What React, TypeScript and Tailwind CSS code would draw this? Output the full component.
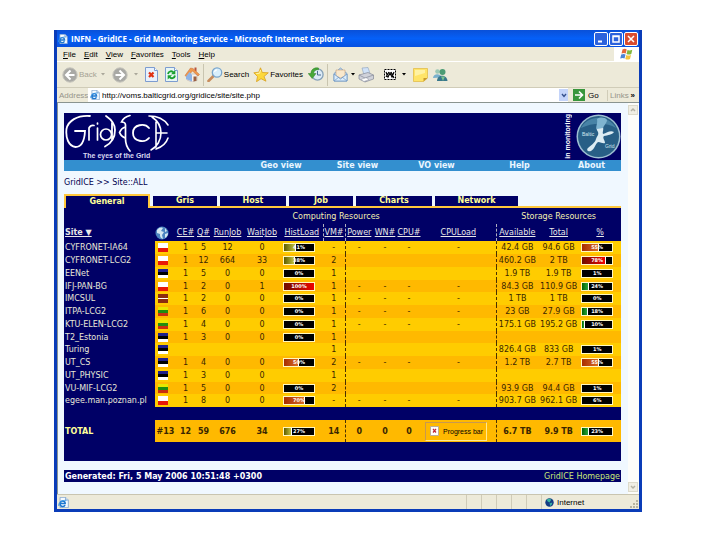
import type { ReactNode } from "react";
import clsx from "clsx";

type FlagCode = "pl" | "ee" | "lv" | "lt";
type Level = "olive" | "red" | "orange" | "green" | "none";

interface Meter {
  value: number;
  level: Level;
}

interface Site {
  name: string;
  flag: FlagCode;
  ce?: string;
  queues?: string;
  run?: string;
  wait?: string;
  hist?: Meter;
  vm: string;
  hosts?: boolean;
  available?: string;
  total?: string;
  used?: Meter;
}

const idle: Meter = { value: 0, level: "none" };

const sites: Site[] = [
  { name: "CYFRONET-IA64", flag: "pl", ce: "1", queues: "5", run: "12", wait: "0", hist: { value: 41, level: "olive" }, vm: "-", hosts: true, available: "42.4 GB", total: "94.6 GB", used: { value: 55, level: "orange" } },
  { name: "CYFRONET-LCG2", flag: "pl", ce: "1", queues: "12", run: "664", wait: "33", hist: { value: 38, level: "olive" }, vm: "2", available: "460.2 GB", total: "2 TB", used: { value: 78, level: "red" } },
  { name: "EENet", flag: "ee", ce: "1", queues: "5", run: "0", wait: "0", hist: idle, vm: "1", available: "1.9 TB", total: "1.9 TB", used: { value: 1, level: "none" } },
  { name: "IFJ-PAN-BG", flag: "pl", ce: "1", queues: "2", run: "0", wait: "1", hist: { value: 100, level: "red" }, vm: "1", hosts: true, available: "84.3 GB", total: "110.9 GB", used: { value: 24, level: "green" } },
  { name: "IMCSUL", flag: "lv", ce: "1", queues: "2", run: "0", wait: "0", hist: idle, vm: "1", hosts: true, available: "1 TB", total: "1 TB", used: { value: 0, level: "none" } },
  { name: "ITPA-LCG2", flag: "lt", ce: "1", queues: "6", run: "0", wait: "0", hist: idle, vm: "1", hosts: true, available: "23 GB", total: "27.9 GB", used: { value: 18, level: "green" } },
  { name: "KTU-ELEN-LCG2", flag: "lt", ce: "1", queues: "4", run: "0", wait: "0", hist: idle, vm: "1", hosts: true, available: "175.1 GB", total: "195.2 GB", used: { value: 10, level: "green" } },
  { name: "T2_Estonia", flag: "ee", ce: "1", queues: "3", run: "0", wait: "0", hist: idle, vm: "1" },
  { name: "Turing", flag: "ee", vm: "1", available: "826.4 GB", total: "833 GB", used: { value: 1, level: "none" } },
  { name: "UT_CS", flag: "ee", ce: "1", queues: "4", run: "0", wait: "0", hist: { value: 50, level: "orange" }, vm: "2", hosts: true, available: "1.2 TB", total: "2.7 TB", used: { value: 55, level: "orange" } },
  { name: "UT_PHYSIC", flag: "ee", ce: "1", queues: "3", run: "0", wait: "0", vm: "1" },
  { name: "VU-MIF-LCG2", flag: "lt", ce: "1", queues: "5", run: "0", wait: "0", hist: idle, vm: "2", available: "93.9 GB", total: "94.4 GB", used: { value: 1, level: "none" } },
  { name: "egee.man.poznan.pl", flag: "pl", ce: "1", queues: "8", run: "0", wait: "0", hist: { value: 70, level: "orange" }, vm: "-", hosts: true, available: "903.7 GB", total: "962.1 GB", used: { value: 6, level: "none" } },
];

const LEVELS: Record<Level, string> = {
  olive: "bg-linear-to-r from-[#5c5c00] to-[#c4c43c]",
  red: "bg-linear-to-r from-[#6e0a00] to-[#f00000]",
  orange: "bg-linear-to-r from-[#a82c00] to-[#d86a24]",
  green: "bg-linear-to-r from-[#006000] to-[#28a83c]",
  none: "bg-black",
};

const FLAGS: Record<FlagCode, string[]> = {
  pl: ["#ffffff", "#ffffff", "#e81808", "#e81808"],
  ee: ["#20208c", "#000000", "#ffffff"],
  lv: ["#8c2c10", "#8c2c10", "#ffffff", "#8c2c10", "#8c2c10"],
  lt: ["#e8e800", "#208c10", "#c83010"],
};

// --- Small pieces ---
const Flag = ({ code }: { code: FlagCode }) => {
  const stripes = FLAGS[code];
  return (
    <svg viewBox="0 0 10 9" className="ml-[3px] block h-[9px] w-[10px]" shapeRendering="crispEdges">
      {stripes.map((color, i) => (
        <rect key={i} x="0" width="10" y={(9 / stripes.length) * i} height={9 / stripes.length} fill={color} />
      ))}
    </svg>
  );
};

const Bar = ({ value, level }: Meter) => (
  <div className="relative ml-[2px] h-[9px] w-8 border border-[#fff8c0] bg-black">
    {level !== "none" && (
      <div className={clsx("h-full", LEVELS[level], value < 100 && "border-r border-white")} style={{ width: `${value}%` }} />
    )}
    <span className="absolute inset-0 text-center text-[5px] leading-[7px] font-bold text-white">{value}%</span>
  </div>
);

const Caret = ({ dim }: { dim?: boolean }) => (
  <svg viewBox="0 0 4 3" className="h-[3px] w-1 shrink-0">
    <path d="M0 0h4L2 2.5z" fill={dim ? "#aaa79a" : "#000"} />
  </svg>
);

const IeIcon = ({ className }: { className?: string }) => (
  <svg viewBox="0 0 16 16" className={clsx("shrink-0", className)}>
    <path d="M3 .5h8l4 4v11H3z" fill="#f4faff" stroke="#6a94c4" />
    <path d="M11 .5v4h4" fill="#cfe2f5" stroke="#6a94c4" />
    <path d="M2.500 9.500h8c0-5-7-5-7.500 0-.3 5 6 5.500 7.200 2" fill="none" stroke="#1f78d0" strokeWidth="2.200" />
    <path d="M1 13C-.5 9 6 4 12 5" fill="none" stroke="#3c9be8" strokeWidth="1.200" />
  </svg>
);

const ArrowIcon = ({ back }: { back?: boolean }) => (
  <svg viewBox="0 0 16 16" className="size-4 shrink-0">
    <circle cx="8" cy="8" r="7.200" fill="#a9a9a5" stroke="#c6c5bc" />
    <path d={back ? "M8.500 3.500 4 8l4.500 4.500M4.500 8H12.500" : "M7.500 3.500 12 8l-4.500 4.500M11.500 8H3.500"} fill="none" stroke="#fff" strokeWidth="2" />
  </svg>
);

const StopIcon = () => (
  <svg viewBox="0 0 13 15" className="h-[15px] w-[13px]">
    <path d="M.5.5h9l3 3v11H.5z" fill="#e8f1fc" stroke="#7c9cd0" />
    <path d="M9.500.5v3h3" fill="#fff" stroke="#7c9cd0" />
    <path d="m4 5.500 4.500 4.500m0-4.500L4 10" stroke="#e03010" strokeWidth="2.200" />
  </svg>
);

const RefreshIcon = () => (
  <svg viewBox="0 0 13 15" className="h-[15px] w-[13px]">
    <path d="M.5.5h9l3 3v11H.5z" fill="#e8f6f4" stroke="#7c9cd0" />
    <path d="M9.500.5v3h3" fill="#fff" stroke="#7c9cd0" />
    <path d="M3 7c.5-3 4-3.500 5.500-1.500M10 8.500c-.5 3-4 3.500-5.500 1.500" fill="none" stroke="#18a030" strokeWidth="1.900" />
    <path d="M10.300 3v4.200H6zM2.700 12.500V8.300H7z" fill="#18a030" />
  </svg>
);

const HomeIcon = () => (
  <svg viewBox="0 0 16 15" className="h-[15px] w-4">
    <path d="M3 7h10v6.500L8 15l-5-2z" fill="#f6f2ee" stroke="#b9aeb0" strokeWidth=".6" />
    <path d="M10.500.5h2v4h-2z" fill="#b8543c" />
    <path d="M1 8.500 6.500 1 9 1.500l6.500 6L14 9 8.500 4 3 10z" fill="#f0984c" stroke="#c06a3c" strokeWidth=".5" />
    <path d="M2 9.500 5.500 5 8 8v6.500L2 12z" fill="#8fb4e6" />
    <path d="M9.500 9.500h3v4.200l-3 .8z" fill="#9c6040" />
  </svg>
);

const SearchIcon = () => (
  <svg viewBox="0 0 16 15" className="h-[15px] w-4">
    <path d="m6.500 9-5 5" stroke="#c88c5c" strokeWidth="2.600" strokeLinecap="round" />
    <circle cx="10" cy="5.500" r="4.700" fill="#d8effc" stroke="#7ba6cc" strokeWidth="1.300" />
    <path d="M7.500 5c.3-1.500 1.200-2 2.500-2.200" fill="none" stroke="#fff" strokeWidth="1.200" />
  </svg>
);

const StarIcon = () => (
  <svg viewBox="0 0 16 15" className="h-[15px] w-4">
    <path d="m7.500.8 1.800 4.700 6 .3-4.300 3.700 2 4.700-5-2.500-4.500 3 1-5.200L.8 5.800l5-.6z" fill="#fcd83c" stroke="#d8a020" strokeWidth=".8" />
    <path d="M7.500 3 6.600 6.200l-3.400.4" fill="none" stroke="#fff6b0" />
  </svg>
);

const HistoryIcon = () => (
  <svg viewBox="0 0 16 15" className="h-[15px] w-4">
    <circle cx="9.500" cy="7.500" r="5.600" fill="#dceaf6" stroke="#84a0b8" strokeWidth="1.300" />
    <path d="M9.500 4v4H13" fill="none" stroke="#486c90" />
    <path d="M10.500 1C5.500.2 3 3 2.900 6.500H.2l4 5 3.800-5H5.500C6 4 7.500 2.500 10.500 2.800z" fill="#46a838" stroke="#2c7c28" strokeWidth=".5" />
  </svg>
);

const MailIcon = () => (
  <svg viewBox="0 0 15 15" className="size-[15px]">
    <path d="M1 6.500 7.500 1 14 6.500v7.500H1z" fill="#b4d4f2" stroke="#7098c4" strokeWidth=".8" />
    <path d="M3 3h9v6L7.500 11 3 9z" fill="#f9e8cc" stroke="#c8a078" strokeWidth=".6" />
    <path d="m1 7 6.500 5L14 7v7H1z" fill="#dcedfb" stroke="#7098c4" strokeWidth=".8" />
    <path d="m1 14 5-4m8 4-5-4" stroke="#7098c4" strokeWidth=".7" />
  </svg>
);

const PrinterIcon = () => (
  <svg viewBox="0 0 16 16" className="size-4">
    <path d="m4 1 6-.5 2 6-6 1.500z" fill="#d0e2f8" stroke="#8ca0bc" strokeWidth=".6" />
    <path d="m1 8 9-2.500L15.500 8v4L7 15l-6-3z" fill="#d0d2da" stroke="#858a98" strokeWidth=".7" />
    <path d="m1 8 6 3 8.500-3M7 11v4" fill="none" stroke="#858a98" strokeWidth=".7" />
    <path d="m3 12.500 5-1.800 3 1.800-5 2z" fill="#fff" stroke="#989ca8" strokeWidth=".5" />
  </svg>
);

const EditIcon = () => (
  <svg viewBox="0 0 12 11" className="h-[11px] w-3">
    <path d="M.5.5h11v10H.5z" fill="#fff" stroke="#000" strokeDasharray="2 1" />
    <path d="m2 3 2 5 2-4 2 4 2-5M2 8l3-5m2 0 3 6" fill="none" stroke="#000" strokeWidth="1.200" />
  </svg>
);

const NoteIcon = () => (
  <svg viewBox="0 0 15 14" className="h-[14px] w-[15px]">
    <path d="M.5.5h14v9.500l-4 3.500H.5z" fill="#ffe468" stroke="#e0b840" strokeWidth=".7" />
    <path d="M14.500 10h-4v3.500z" fill="#c8982c" />
    <path d="M2 2h10v3L2 8z" fill="#fff2a4" />
  </svg>
);

const MessengerIcon = () => (
  <svg viewBox="0 0 16 14" className="h-[14px] w-4">
    <circle cx="5.500" cy="3.500" r="2.300" fill="#9cc8b4" />
    <path d="M1 10c0-5 8-5 8.500-.5z" fill="#78b0cc" />
    <circle cx="10.500" cy="4" r="3" fill="#4c9c74" />
    <path d="M5 13c0-7 10-7 10.500 0z" fill="#38788c" />
    <path d="M9 8.500 11 13l2-4.500" fill="#7cc48c" />
  </svg>
);

const WindowsLogo = () => (
  <svg viewBox="0 0 13 12" className="h-3 w-[13px]">
    <path d="M2.500 1.500Q5 0 6.700 1.500L5.700 5.500Q4 4.500 1.500 5.500z" fill="#e46838" />
    <path d="M7.500 2Q9.500 3 12.300 1.800L11.300 6Q9 7 6.500 6z" fill="#84b83c" />
    <path d="M1.200 6.500Q4 5.500 5.500 6.500L4.500 10.500Q3 9.500.2 10.500z" fill="#4c84d4" />
    <path d="M6.300 7Q8.500 8 11 7L10 11Q7.500 12 5.300 11z" fill="#f4c43c" />
  </svg>
);

// Arcs and strokes of the GridICE emblem
const Emblem = () => (
  <svg viewBox="0 0 106 38" className="block h-[38px] w-[106px]" fill="none" stroke="#fff" strokeLinecap="round">
    <path d="M25 2C12 1 3 7 1.500 15c-1 9 2 17 9 18 6 0 9-7 9.500-16H10" strokeWidth="1.800" />
    <path d="M24 26V14c1-2 3-3 5-2.500M32.500 14v12M32.500 9v1" strokeWidth="1.700" />
    <circle cx="41" cy="20.500" r="5.500" strokeWidth="1.700" />
    <path d="M41 2c6 4 9 8 9 14 0 8-3 13-10 16.500M47 9v17" strokeWidth="1.800" />
    <path d="M65 1.500c-4 1-7 3-8.500 6.500 3 0 4 1 4 3v14c0 5 1 8 4.500 12M60 13c-3 1-4.500 3-5.500 5.500 1 2.500 2.500 4.500 5.500 5.500" strokeWidth="1.700" />
    <path d="M84 14c-4-5-16-4-16 5s12 10 16 5" strokeWidth="1.800" />
    <path d="M87 3c6 4 9 9 9 16s-4 14-10 17M91 8v25M91 19h11M84 2c9 0 15 3 19 9M103 24c-2 6-6 9-12 11" strokeWidth="1.600" />
  </svg>
);

const BalticLogo = () => (
  <svg viewBox="0 0 45 45" className="size-[45px]">
    <circle cx="22.500" cy="22.500" r="22" fill="#9dbfd2" />
    <circle cx="22.500" cy="22.500" r="20.500" fill="#285f86" />
    <path d="M5 14C12 1 32 0 40 14 30 8 16 9 5 14z" fill="#4883a6" />
    <path d="M21 13c2-2 5-2 6 0 1 3-1 5 0 7 4-1 7-4 11-2-2 3-6 3-10 4-2 2 1 4 1 7-2 1-4-1-7-1-3 2-3 7-7 9-3 1-5-1-3-3 3-3 7-5 8-9 1-3 3-4 2-7-1-2-2-3-1-5z" fill="#dcecf3" />
    <path d="M21 5c3-2 8-2 10 1 0 3-3 5-4 8l-6 1c-2-2 1-5 0-10z" fill="#7fb4d0" />
    <text x="6" y="22" fontSize="5" fill="#d3e8f0" fontFamily="Liberation Sans, sans-serif">Baltic</text>
    <text x="29" y="34" fontSize="5" fill="#d3e8f0" fontFamily="Liberation Sans, sans-serif">Grid</text>
  </svg>
);

const Globe = () => (
  <svg viewBox="0 0 14 14" className="block size-[14px]">
    <circle cx="7" cy="7" r="6.500" fill="#4c84c0" />
    <path d="M2 4c2-3 5-3 6-2L6 5l3 1-2 3 1 4c-3-1-3-3-3-5L2 7zM10 2l2 3-2 1zM10 8l3-1c0 2-1 4-3 5z" fill="#d4e6f0" />
  </svg>
);

const Separator = () => <div className="h-[22px] w-px shrink-0 bg-[#c9c5b0]" />;

const toolButton = "flex shrink-0 items-center";

const Toolbar = () => (
  <div className="flex h-[26px] items-center overflow-hidden border-t border-white bg-[#edead9] pl-[5px] whitespace-nowrap">
    <button className={clsx(toolButton, "gap-px text-[#a5a294]")}><ArrowIcon back />Back</button>
    <div className="ml-1"><Caret dim /></div>
    <button aria-label="Forward" className={clsx(toolButton, "ml-[7px] gap-1.5")}><ArrowIcon /><Caret dim /></button>
    <button aria-label="Stop" className={clsx(toolButton, "ml-[7px]")}><StopIcon /></button>
    <button aria-label="Refresh" className={clsx(toolButton, "ml-[7px]")}><RefreshIcon /></button>
    <button aria-label="Home" className={clsx(toolButton, "mr-[3px] ml-1.5")}><HomeIcon /></button>
    <Separator />
    <button className={clsx(toolButton, "ml-[3px] gap-px")}><SearchIcon />Search</button>
    <button className={clsx(toolButton, "ml-1 gap-px")}><StarIcon />Favorites</button>
    <button aria-label="History" className={clsx(toolButton, "mr-[3px] ml-[5px]")}><HistoryIcon /></button>
    <Separator />
    <button aria-label="Mail" className={clsx(toolButton, "ml-[5px] gap-[3px]")}><MailIcon /><Caret /></button>
    <button aria-label="Print" className={clsx(toolButton, "ml-[3px]")}><PrinterIcon /></button>
    <button aria-label="Edit" className={clsx(toolButton, "ml-2.5 gap-1.5")}><EditIcon /><Caret /></button>
    <button aria-label="Discuss" className={clsx(toolButton, "ml-[7px]")}><NoteIcon /></button>
    <button aria-label="Messenger" className={clsx(toolButton, "ml-1")}><MessengerIcon /></button>
  </div>
);

const WindowButton = ({ label, red, children }: { label: string; red?: boolean; children: ReactNode }) => (
  <button aria-label={label} className={clsx("flex size-[14px] items-center justify-center rounded-[2px] border border-white", red ? "bg-[#d84c30]" : "bg-[#2c62dc]")}>
    <svg viewBox="0 0 10 10" className="size-[10px]" fill="none" stroke="#fff" strokeWidth="1.500">{children}</svg>
  </button>
);

const ScrollArrow = ({ label, d }: { label: string; d: string }) => (
  <button aria-label={label} className="flex size-[10px] items-center justify-center border border-[#dcdacb] bg-[#f0eee4]">
    <svg viewBox="0 0 6 6" className="size-1.5" fill="none" stroke="#b4b2a4" strokeWidth="1.500"><path d={d} /></svg>
  </button>
);

const navItems = [
  { label: "Geo view", width: "w-[76px]" },
  { label: "Site view", width: "w-[77px]" },
  { label: "VO view", width: "w-[81px]" },
  { label: "Help", width: "w-[85px]" },
  { label: "About", width: "w-[59px]" },
];

const tabs = [
  { label: "Gris", width: "w-16" },
  { label: "Host", width: "w-[66px]" },
  { label: "Job", width: "w-16" },
  { label: "Charts", width: "w-[76px]" },
  { label: "Network", width: "w-[83px]" },
];

const dashed = "border-l border-dashed";

const SiteRow = ({ site, index }: { site: Site; index: number }) => {
  const mark = site.hosts ? "-" : "";
  return (
    <tr className={index % 4 === 3 ? "h-3" : "h-[13px]"}>
      <th scope="row" className="bg-[#000066] pl-px text-left font-normal text-[#e8e8d8]">
        <a href="#site">{site.name}</a>
      </th>
      <td><Flag code={site.flag} /></td>
      <td>{site.ce}</td>
      <td>{site.queues}</td>
      <td>{site.run}</td>
      <td>{site.wait}</td>
      <td>{site.hist && <Bar {...site.hist} />}</td>
      <td>{site.vm}</td>
      <td className={clsx(dashed, "border-[#4a3000]")}>{mark}</td>
      <td>{mark}</td>
      <td>{mark}</td>
      <td>{mark}</td>
      <td className={clsx(dashed, "border-[#4a3000]")}>{site.available}</td>
      <td>{site.total}</td>
      <td>{site.used && <Bar {...site.used} />}</td>
    </tr>
  );
};

const ResourceTable = () => (
  <table className="w-full table-fixed border-collapse text-center leading-[11px] whitespace-nowrap [&_td]:p-0">
    <colgroup>
      <col className="w-[91px]" />
      <col className="w-[21px]" />
      <col className="w-[19px]" />
      <col className="w-[17px]" />
      <col className="w-[31px]" />
      <col className="w-[38px]" />
      <col className="w-[42px]" />
      <col className="w-[22px]" />
      <col className="w-7" />
      <col className="w-6" />
      <col className="w-6" />
      <col className="w-[75px]" />
      <col className="w-[42px]" />
      <col className="w-[41px]" />
      <col className="w-[42px]" />
    </colgroup>
    <thead className="text-[#e8e8e8] [&_th]:p-0 [&_th]:font-normal">
      <tr className="h-4 text-[#f4f0b0]">
        <td colSpan={2} />
        <th colSpan={10} scope="colgroup">Computing Resources</th>
        <th colSpan={3} scope="colgroup">Storage Resources</th>
      </tr>
      <tr className="h-[17px] underline">
        <th scope="col" className="text-left"><span className="pl-px font-bold">Site ▼</span></th>
        <th scope="col" aria-label="Country"><Globe /></th>
        <th scope="col">CE#</th>
        <th scope="col">Q#</th>
        <th scope="col">RunJob</th>
        <th scope="col">WaitJob</th>
        <th scope="col">HistLoad</th>
        <th scope="col" className={clsx(dashed, "border-[#b0b0c0]")}>VM#</th>
        <th scope="col" className={clsx(dashed, "border-[#b0b0c0]")}>Power</th>
        <th scope="col">WN#</th>
        <th scope="col">CPU#</th>
        <th scope="col">CPULoad</th>
        <th scope="col" className={clsx(dashed, "border-[#b0b0c0]")}>Available</th>
        <th scope="col">Total</th>
        <th scope="col">%</th>
      </tr>
    </thead>
    <tbody className="text-[#3a2600] [&>tr:nth-child(even)]:bg-[#ffb900] [&>tr:nth-child(odd)]:bg-[#ffcc00]">
      {sites.map((site, i) => <SiteRow key={site.name} site={site} index={i} />)}
    </tbody>
    <tfoot className="font-bold text-[#3a2600]">
      <tr className="h-[13px]"><td colSpan={15} /></tr>
      <tr className="h-[22px] bg-[#ffb900]">
        <th scope="row" className="bg-[#000066] pl-px text-left text-[#ffff99]">TOTAL</th>
        <td>#13</td>
        <td>12</td>
        <td>59</td>
        <td>676</td>
        <td>34</td>
        <td><Bar value={27} level="olive" /></td>
        <td>14</td>
        <td className={clsx(dashed, "border-[#4a3000]")}>0</td>
        <td>0</td>
        <td>0</td>
        <td>
          <div className="ml-1 flex h-[19px] w-[62px] items-center gap-1 border border-t-[#c89850] border-r-[#ffe890] border-b-[#ffe890] border-l-[#c89850] pl-1 font-normal">
            <svg viewBox="0 0 9 10" className="h-[10px] w-[9px]">
              <path d="M.5.500h8v9h-8z" fill="#fff" stroke="#bcae98" />
              <path d="m3 3 3 3.500m0-3.500L3 6.500" stroke="#c02838" strokeWidth="1.200" />
            </svg>
            <span className="font-['Liberation_Sans',sans-serif] text-[7px] text-black">Progress bar</span>
          </div>
        </td>
        <td className={clsx(dashed, "border-[#4a3000]")}>6.7 TB</td>
        <td>9.9 TB</td>
        <td><Bar value={23} level="green" /></td>
      </tr>
    </tfoot>
  </table>
);

// --- Page shown in the browser ---
const GridPage = () => (
  <main className="min-w-0 flex-1 bg-[#f0f8ff] pt-[10px] pr-[7px] pb-3 pl-[6px] font-['DejaVu_Sans',Verdana,sans-serif] text-[8px] leading-[11px]">
    <header>
      <div className="flex h-[47px] items-start justify-between bg-[#000066]">
        <div className="pt-px pl-px">
          <Emblem />
          <p className="pl-[18px] font-['Liberation_Sans',sans-serif] text-[7px] leading-[7px] font-bold text-[#d8d8f0]">The eyes of the Grid</p>
        </div>
        <div className="flex items-center gap-1 pt-px">
          <span className="rotate-180 font-['Liberation_Sans',sans-serif] text-[7px] leading-[8px] font-bold text-white [writing-mode:vertical-rl]">in monitoring</span>
          <BalticLogo />
        </div>
      </div>
      <nav className="flex h-[11px] justify-end bg-[#338fcf] font-bold text-[#eaf6ff]">
        {navItems.map((item) => (
          <a key={item.label} href="#view" className={clsx("text-center", item.width)}>{item.label}</a>
        ))}
      </nav>
    </header>
    <p className="py-[6px] text-[#000050]">GridICE &gt;&gt; Site::ALL</p>
    <div className="flex items-stretch font-bold text-[#ffff99]">
      <button className="h-[14px] w-[86px] border-2 border-b-0 border-[#ffc83c] bg-[#000066] leading-[10px] font-bold">General</button>
      <div className="flex flex-1 gap-[3px] border-b-2 border-[#ffc83c] pt-[2px] pl-[3px]">
        {tabs.map((tab) => (
          <button key={tab.label} className={clsx("bg-[#000066] leading-[10px] font-bold", tab.width)}>{tab.label}</button>
        ))}
      </div>
    </div>
    <section className="bg-[#000066] pb-[19px]">
      <ResourceTable />
    </section>
    <footer className="mt-[9px] flex h-3 items-center justify-between bg-[#000066] px-px">
      <span className="font-bold text-white">Generated: Fri, 5 May 2006 10:51:48 +0300</span>
      <a href="#home" className="text-[#c8e878]">GridICE Homepage</a>
    </footer>
  </main>
);

const menus = ["File", "Edit", "View", "Favorites", "Tools", "Help"];

export default function App() {
  return (
    <div className="min-h-screen bg-white pt-[30px] pr-[78px] pb-[30px] pl-[54px]">
      <div className="border-3 border-t-0 border-[#0a3cb8] bg-[#edead9] font-['Liberation_Sans',Tahoma,sans-serif] text-[8px] leading-[11px] text-black">
        <div className="flex h-[17px] items-center bg-linear-to-b from-[#0a50d8] via-[#0560f8] to-[#0650e0] text-white">
          <IeIcon className="mr-[3px] ml-px size-[10px]" />
          <h1 className="min-w-0 flex-1 truncate font-['Open_Sans',sans-serif] font-bold">INFN - GridICE - Grid Monitoring Service - Microsoft Internet Explorer</h1>
          <div className="flex gap-px pr-px">
            <WindowButton label="Minimize"><path d="M2 7.500h4" strokeWidth="2" /></WindowButton>
            <WindowButton label="Restore"><path d="M2 2h6v6H2zM2 2.500h6" /></WindowButton>
            <WindowButton label="Close" red><path d="m2 2 6 6m0-6L2 8" /></WindowButton>
          </div>
        </div>

        <div className="flex h-[14px] items-stretch justify-between">
          <div className="flex items-center gap-2 pl-[6px]">
            {menus.map((menu) => (
              <button key={menu} className="first-letter:underline">{menu}</button>
            ))}
          </div>
          <div className="flex w-[25px] items-center justify-center bg-white"><WindowsLogo /></div>
        </div>

        <Toolbar />

        <div className="flex h-[15px] items-center border-t border-[#d0ccb8]">
          <label htmlFor="address" className="w-[31px] pl-[2px] text-[#96948a]">Address</label>
          <div className="flex h-full min-w-0 flex-1 items-center bg-white pl-[2px]">
            <IeIcon className="size-[10px]" />
            <input id="address" className="h-full min-w-0 flex-1 pl-[2px] outline-none" defaultValue="http://voms.balticgrid.org/gridice/site/site.php" />
            <button aria-label="Show addresses" className="flex h-3 w-[9px] items-center justify-center bg-[#c4d4fa]">
              <svg viewBox="0 0 6 5" className="h-[5px] w-1.5"><path d="m1 1 2 2.500L5 1" fill="none" stroke="#34508c" strokeWidth="1.400" /></svg>
            </button>
          </div>
          <button className="ml-[5px] flex w-[34px] items-center gap-[3px]">
            <svg viewBox="0 0 12 12" className="size-3">
              <path d="M0 0h12v12H0z" fill="#38963c" />
              <path d="M2 6h7M6 2.500 9.500 6 6 9.500" fill="none" stroke="#fff" strokeWidth="1.600" />
            </svg>
            Go
          </button>
          <button className="flex w-8 justify-between border-l border-[#d0ccb8] pr-1 pl-[2px] text-[#96948a]">
            Links<span className="font-bold text-black">»</span>
          </button>
        </div>

        <div className="flex border-t border-l border-[#8a9490]">
          <GridPage />
          <div className="flex w-[11px] flex-col justify-between bg-[#fdfdfa] pt-[2px] pb-[2px]">
            <ScrollArrow label="Scroll up" d="m1 4 2-2 2 2" />
            <ScrollArrow label="Scroll down" d="m1 2 2 2 2-2" />
          </div>
        </div>

        <footer className="flex h-[15px] items-stretch border-t border-[#c9c5b0]">
          <div className="flex flex-1 items-center pl-px"><IeIcon className="size-[11px]" /></div>
          {[0, 1, 2, 3, 4].map((n) => <div key={n} className="w-[15px] border-l border-[#cfcbb8]" />)}
          <div className="flex w-[98px] items-center gap-[3px] border-l border-[#cfcbb8] pl-[3px]">
            <svg viewBox="0 0 10 10" className="size-[9px]">
              <circle cx="5" cy="5" r="4.700" fill="#143c84" />
              <path d="M2 2c2-2 4-1 5 0L5 5 3 4zM5 6l3-1c0 2-1 3-2 4z" fill="#38b4a0" />
            </svg>
            Internet
            <svg viewBox="0 0 8 8" className="mt-auto mr-px mb-px ml-auto size-2" fill="#b8b4a0">
              <path d="M6 0h2v2H6zM6 3h2v2H6zM6 6h2v2H6zM3 3h2v2H3zM3 6h2v2H3zM0 6h2v2H0z" />
            </svg>
          </div>
        </footer>
      </div>
    </div>
  );
}
